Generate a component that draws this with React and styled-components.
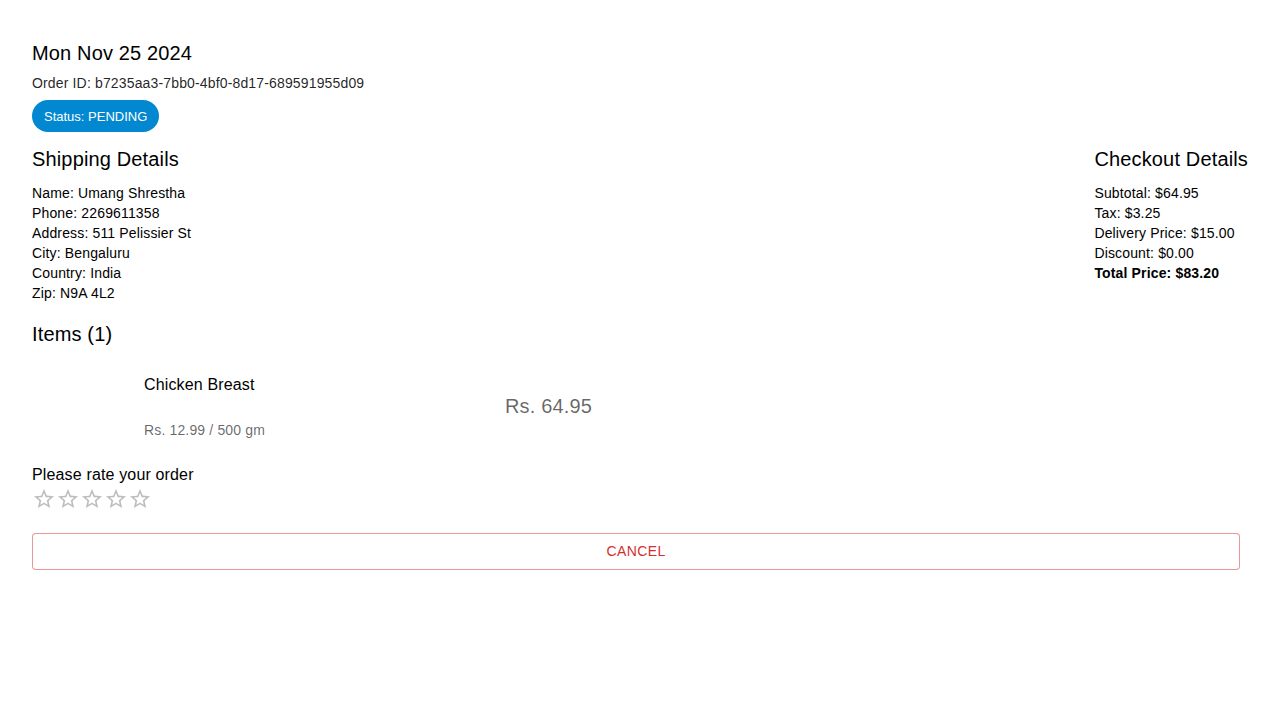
import styled, { createGlobalStyle } from 'styled-components';

const GlobalStyle = createGlobalStyle`
  * { box-sizing: border-box; }
  body {
    margin: 0;
    background: #fff;
    font-family: "Liberation Sans", Arial, Helvetica, sans-serif;
    color: #000;
  }
`;

const order = {
  date: 'Mon Nov 25 2024',
  id: 'b7235aa3-7bb0-4bf0-8d17-689591955d09',
  status: 'PENDING',
  shipping: [
    ['Name', 'Umang Shrestha'],
    ['Phone', '2269611358'],
    ['Address', '511 Pelissier St'],
    ['City', 'Bengaluru'],
    ['Country', 'India'],
    ['Zip', 'N9A 4L2'],
  ],
  checkout: [
    ['Subtotal', '$64.95'],
    ['Tax', '$3.25'],
    ['Delivery Price', '$15.00'],
    ['Discount', '$0.00'],
  ],
  total: '$83.20',
  items: [{ name: 'Chicken Breast', unit: 'Rs. 12.99 / 500 gm', price: 'Rs. 64.95' }],
};

function StarIcon() {
  return (
    <svg viewBox="0 0 24 24" width="24" height="24" fill="currentColor">
      <path d="M22 9.24l-7.19-.62L12 2 9.19 8.63 2 9.24l5.46 4.73L5.82 21 12 17.27 18.18 21l-1.63-7.03L22 9.24zM12 15.4l-3.76 2.27 1-4.28-3.32-2.88 4.38-.38L12 6.1l1.71 4.04 4.38.38-3.32 2.88 1 4.28L12 15.4z" />
    </svg>
  );
}

function App() {
  return (
    <>
      <GlobalStyle />
      <Page>
        <Heading>{order.date}</Heading>
        <OrderId>Order ID: {order.id}</OrderId>
        <Chip>Status: {order.status}</Chip>

        <DetailsRow>
          <div>
            <Heading>Shipping Details</Heading>
            <Lines>
              {order.shipping.map(([k, v]) => (
                <Line key={k}>
                  {k}: {v}
                </Line>
              ))}
            </Lines>
          </div>
          <div>
            <Heading>Checkout Details</Heading>
            <Lines>
              {order.checkout.map(([k, v]) => (
                <Line key={k}>
                  {k}: {v}
                </Line>
              ))}
              <Line $bold>Total Price: {order.total}</Line>
            </Lines>
          </div>
        </DetailsRow>

        <ItemsHeading>Items ({order.items.length})</ItemsHeading>
        {order.items.map((item) => (
          <ItemRow key={item.name}>
            <Thumb />
            <ItemInfo>
              <ItemName>{item.name}</ItemName>
              <ItemUnit>{item.unit}</ItemUnit>
            </ItemInfo>
            <ItemPrice>{item.price}</ItemPrice>
          </ItemRow>
        ))}

        <RateLabel>Please rate your order</RateLabel>
        <Stars>
          {[1, 2, 3, 4, 5].map((n) => (
            <StarIcon key={n} />
          ))}
        </Stars>

        <CancelButton>Cancel</CancelButton>
      </Page>
    </>
  );
}

const Page = styled.div`
  display: flex;
  flex-direction: column;
  align-items: flex-start;
  padding: 37px 40px 32px 32px;
`;

const Heading = styled.h6`
  margin: 0;
  font-size: 20px;
  font-weight: 400;
  line-height: 32px;
  letter-spacing: 0.0075em;
`;

const OrderId = styled.p`
  margin: 4px 0 0;
  font-size: 14px;
  line-height: 20px;
  letter-spacing: 0.01071em;
  color: rgba(0, 0, 0, 0.87);
`;

const Chip = styled.span`
  margin-top: 7px;
  height: 32px;
  padding: 0 12px;
  display: inline-flex;
  align-items: center;
  border-radius: 16px;
  background: #0288d1;
  color: #fff;
  font-size: 13px;
`;

const DetailsRow = styled.div`
  align-self: stretch;
  margin: 11px -8px 0 0;
  display: flex;
  justify-content: space-between;
`;

const Lines = styled.div`
  margin-top: 8px;
  display: flex;
  flex-direction: column;
`;

const Line = styled.span`
  font-size: 14px;
  line-height: 20px;
  letter-spacing: 0.01071em;
  font-weight: ${({ $bold }) => ($bold ? 700 : 400)};
`;

const ItemsHeading = styled(Heading)`
  margin-top: 15px;
`;

const ItemRow = styled.div`
  margin-top: 6px;
  display: flex;
  align-items: center;
  height: 100px;
`;

const Thumb = styled.div`
  width: 100px;
  height: 100px;
  margin-right: 12px;
`;

const ItemInfo = styled.div`
  width: 361px;
  display: flex;
  flex-direction: column;
  gap: 23px;
`;

const ItemName = styled.span`
  font-size: 16px;
  line-height: 24px;
  letter-spacing: 0.00938em;
`;

const ItemUnit = styled.span`
  font-size: 14px;
  line-height: 20px;
  letter-spacing: 0.01071em;
  color: rgba(0, 0, 0, 0.6);
`;

const ItemPrice = styled.span`
  font-size: 20px;
  line-height: 32px;
  letter-spacing: 0.0075em;
  color: rgba(0, 0, 0, 0.6);
`;

const RateLabel = styled.p`
  margin: 7px 0 0;
  font-size: 16px;
  line-height: 24px;
  letter-spacing: 0.00938em;
`;

const Stars = styled.div`
  display: flex;
  color: rgba(0, 0, 0, 0.26);
`;

const CancelButton = styled.button`
  margin-top: 22px;
  align-self: stretch;
  height: 37px;
  padding: 0;
  background: #fff;
  border: 1px solid rgba(211, 47, 47, 0.5);
  border-radius: 4px;
  color: #d32f2f;
  font-family: "Liberation Sans", Arial, sans-serif;
  font-size: 14px;
  font-weight: 400;
  line-height: 35px;
  letter-spacing: 0.02857em;
  text-transform: uppercase;
  cursor: pointer;
`;

export default App;
